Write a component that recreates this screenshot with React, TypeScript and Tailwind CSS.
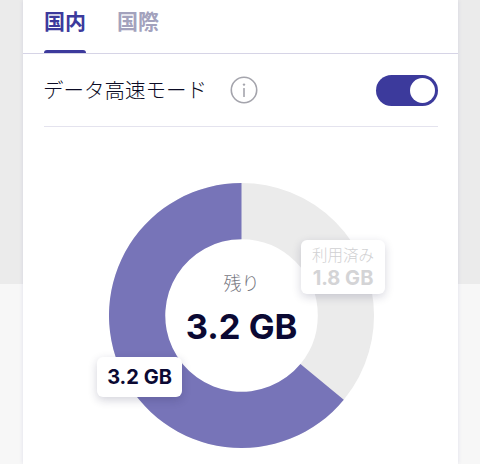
import React from "react";

const JP = "font-['Noto_Sans_CJK_JP','Noto_Sans',sans-serif]";

// outer r 132, inner r 76, used slice 36% of the ring
function Donut() {
  return (
    <svg width="265" height="265" viewBox="0 0 264 264" className="block">
      <circle cx="132" cy="132" r="104" fill="none" stroke="#ebebeb" strokeWidth="56" />
      <path
        d="M132 0 A132 132 0 1 0 233.9 215.9 L190.7 180.3 A76 76 0 1 1 132 56 Z"
        fill="#7774b8"
      />
    </svg>
  );
}

export default function App() {
  return (
    <div className="h-[464px] w-[480px] overflow-hidden bg-[linear-gradient(#ebebeb_284px,#f7f7f7_284px)]">
      <div className={`ml-[23px] h-[464px] w-[435px] bg-white shadow-[0_0_4px_rgba(60,58,150,0.12)] ${JP}`}>
        {/* Tabs */}
        <div className="flex h-[54px] gap-[31px] border-b border-[#d6d4e6] pl-[21px]">
          <div className="relative h-[53px] w-[42px] pt-[4px] text-[21px] leading-[32px] font-bold text-[#3c3a9c]">
            国内
            <div className="absolute right-0 bottom-0 left-0 h-[3px] rounded-t-[3px] bg-[#3c3a9c]" />
          </div>
          <div className="pt-[4px] text-[21px] leading-[32px] font-bold text-[#a3a2bd]">国際</div>
        </div>

        {/* High speed mode row */}
        <div className="mr-[20px] ml-[21px] flex h-[73px] items-center border-b border-[#e4e3ee]">
          <span className="-mt-[2px] -ml-[1px] w-[166px] text-[20.5px] leading-[28px] font-light whitespace-nowrap text-[#0b0b24]">データ高速モード</span>
          <svg width="28" height="28" viewBox="0 0 28 28" className="ml-[21px]">
            <circle cx="14" cy="14" r="12.7" fill="none" stroke="#a4a4ac" strokeWidth="1.6" />
            <circle cx="14" cy="8.6" r="1.2" fill="#a4a4ac" />
            <rect x="13.2" y="12" width="1.6" height="9" rx="0.5" fill="#a4a4ac" />
          </svg>
          <div className="ml-auto flex h-[31px] w-[62px] items-center justify-end rounded-full bg-[#3c3a9c] pr-[3px]">
            <div className="h-[25px] w-[25px] rounded-full bg-white" />
          </div>
        </div>

        {/* Chart */}
        <div className="relative mt-[56px] ml-[86px] h-[265px] w-[265px]">
          <Donut />
          <div className="absolute inset-0 flex flex-col items-center">
            <span className="mt-[84px] text-[18px] leading-[30px] font-light text-[#77777f]">残り</span>
            <span className="mt-[8px] font-['Inter',sans-serif] text-[34.5px] leading-[44px] font-bold whitespace-nowrap text-[#0b0933]">
              3.2 GB
            </span>
          </div>
          <div className="absolute top-[57px] left-[192px] flex h-[54px] w-[84px] flex-col items-center rounded-[6px] bg-white shadow-[0_3px_10px_rgba(30,30,70,0.18)]">
            <span className="mt-[3px] text-[15.5px] leading-[22px] font-light whitespace-nowrap text-[#d0d0d2]">利用済み</span>
            <span className="mt-[1px] font-['Inter',sans-serif] text-[20px] leading-[24px] font-bold whitespace-nowrap text-[#d4d4d6]">1.8 GB</span>
          </div>
          <div className="absolute top-[174px] left-[-12px] flex h-[40px] w-[85px] items-center justify-center rounded-[6px] bg-white shadow-[0_3px_10px_rgba(30,30,70,0.2)]">
            <span className="font-['Inter',sans-serif] text-[20px] leading-[24px] font-bold whitespace-nowrap text-[#0b0933]">3.2 GB</span>
          </div>
        </div>
      </div>
    </div>
  );
}
